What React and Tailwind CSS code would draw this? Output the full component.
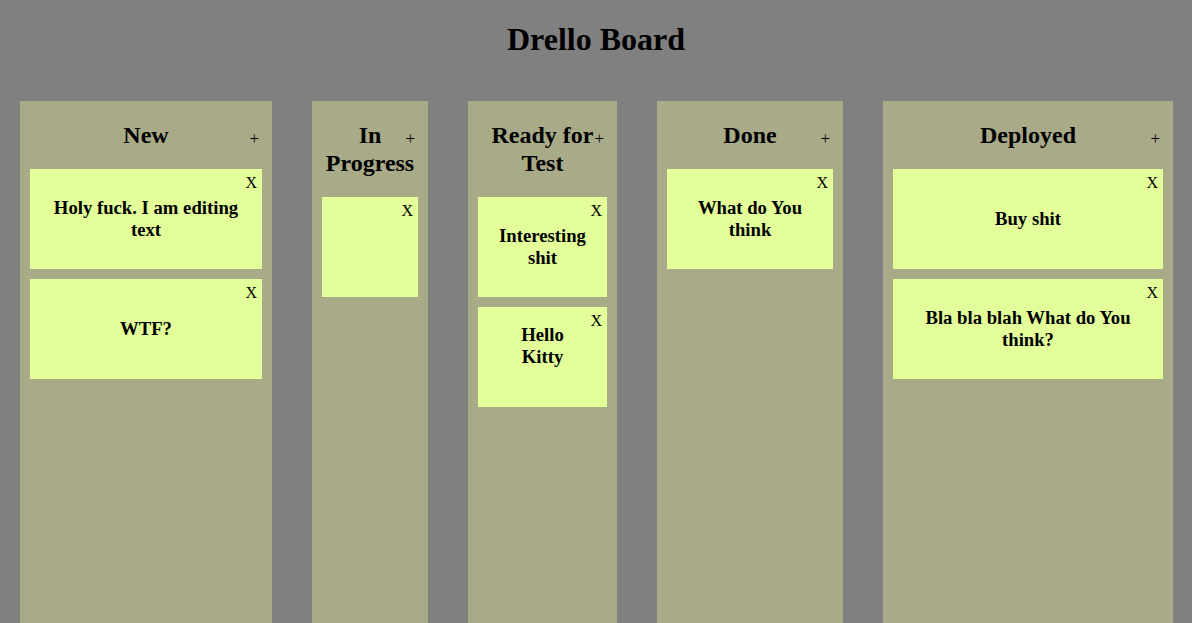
import React from 'react';

const columns = [
  { title: 'New', width: 'w-[252px]', cards: [{ text: 'Holy fuck. I am editing text' }, { text: 'WTF?' }] },
  { title: 'In Progress', width: 'w-[116px]', cards: [{ text: '' }] },
  { title: 'Ready for Test', width: 'w-[149px]', cards: [{ text: 'Interesting shit' }, { text: 'Hello\nKitty', trailing: true }] },
  { title: 'Done', width: 'w-[186px]', cards: [{ text: 'What do You think' }] },
  { title: 'Deployed', width: 'w-[290px]', cards: [{ text: 'Buy shit' }, { text: 'Bla bla blah What do You think?' }] },
];

function Card({ text, trailing }) {
  return (
    <div className="relative h-[100px] bg-[#e2ff9a] flex items-center justify-center px-4">
      <span className="absolute right-[5px] top-[4px] text-[16px] leading-[20px]">X</span>
      <p className={`whitespace-pre-line text-center text-[18.7px] leading-[22px] font-bold ${trailing ? 'pb-[22px]' : ''}`}>{text}</p>
    </div>
  );
}

function Column({ title, width, cards }) {
  return (
    <div className={`relative ${width} shrink-0 min-h-[540px] bg-[#a8aa88] px-[10px] pt-5`}>
      <span className="absolute right-[13px] top-[28px] text-[17px] leading-[20px]">+</span>
      <h2 className="text-center text-[24px] leading-[28px] font-bold mb-5">{title}</h2>
      <div className="flex flex-col gap-[10px]">
        {cards.map((c, i) => (
          <Card key={i} {...c} />
        ))}
      </div>
    </div>
  );
}

export default function App() {
  return (
    <div className="h-[623px] overflow-hidden bg-[#808080] text-black font-['Liberation_Serif',serif]">
      <h1 className="pt-[21px] text-center text-[32px] leading-[37px] font-bold">Drello Board</h1>
      <div className="mt-[43px] flex gap-10 pl-5">
        {columns.map(col => (
          <Column key={col.title} {...col} />
        ))}
      </div>
    </div>
  );
}
